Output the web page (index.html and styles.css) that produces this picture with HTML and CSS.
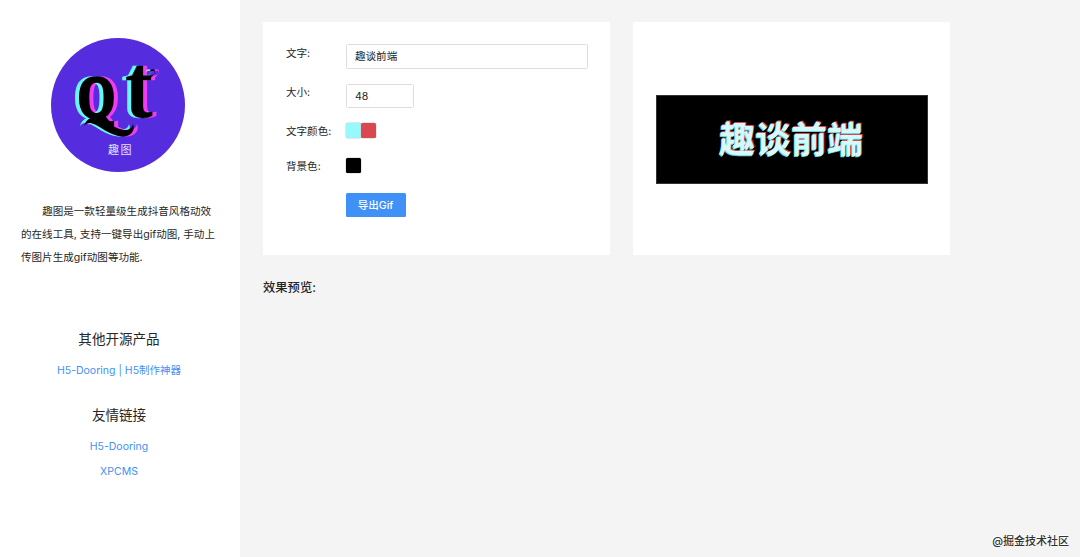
FILE: index.html
```html
<!DOCTYPE html>
<html lang="zh-CN">
<head>
<meta charset="utf-8">
<title>趣图</title>
<link rel="stylesheet" href="styles.css">
</head>
<body>
<div class="layout">
  <aside class="sidebar">
    <svg class="logo" viewBox="0 0 134 134" role="img" aria-label="趣图">
      <defs>
        <g id="mark">
          <text class="mark-q" transform="translate(27 78.5) scale(.79 1)">Q</text>
          <text class="mark-t" transform="translate(74 79) scale(.92 1)">t</text>
          <!-- flourishes under the Q and on the crossbar of the t -->
          <path d="M33 88C35 81 42 77 48 80C57 84 64 91 73 92C78 92 81 90 82 86C85 93 79 99 71 98.500C58 97.500 49 87.500 41 85.500C37 84.500 35 85.500 33 88Z"/>
          <path d="M92 38H98Q103 37.500 104 34Q102 31.500 99 34A2.600 2.600 0 1 1 103 36Q101 40.500 94 41H92Z"/>
        </g>
      </defs>
      <circle cx="67" cy="67" r="67" fill="#552ddf"/>
      <use href="#mark" x="4" fill="#f13cf4" stroke="#f13cf4"/>
      <use href="#mark" x="-4" fill="#66f7fc" stroke="#66f7fc"/>
      <use href="#mark" fill="#000" stroke="#000"/>
      <text class="mark-name" x="57" y="116">趣图</text>
    </svg>
    <p class="intro">趣图是一款轻量级生成抖音风格动效的在线工具, 支持一键导出gif动图, 手动上传图片生成gif动图等功能.</p>
    <section class="links">
      <h3>其他开源产品</h3>
      <a>H5-Dooring | H5制作神器</a>
    </section>
    <section class="links">
      <h3>友情链接</h3>
      <a>H5-Dooring</a>
      <a>XPCMS</a>
    </section>
  </aside>
  <main class="content">
    <div class="panels">
      <form class="panel form">
        <div class="row row-text"><label>文字:</label><div class="input">趣谈前端</div></div>
        <div class="row row-size"><label>大小:</label><div class="input small">48</div></div>
        <div class="row row-color"><label>文字颜色:</label><span class="swatch cyan"></span><span class="swatch red"></span></div>
        <div class="row row-bg"><label>背景色:</label><span class="swatch black"></span></div>
        <button class="export" type="button">导出Gif</button>
      </form>
      <div class="panel preview"><div class="stage">趣谈前端</div></div>
    </div>
    <h2 class="result">效果预览:</h2>
  </main>
  <div class="watermark">@掘金技术社区</div>
</div>
</body>
</html>
```
FILE: styles.css
```css
* { box-sizing: border-box; }
body {
  margin: 0;
  font: 10.57px/23px Inter, "Noto Sans CJK SC", sans-serif;
  color: #262626;
}
h2, h3, p { margin: 0; }
.layout {
  position: relative;
  display: flex;
  height: 557px;
  overflow: hidden;
  background: #f4f4f4;
}
.sidebar {
  width: 240px;
  padding: 38px 21px 0;
  background: #fff;
  display: flex;
  flex-direction: column;
}
.logo {
  width: 134px;
  height: 134px;
  margin-left: 30px;
  flex: none;
}
.mark-q {
  font: bold 60px "Liberation Serif", serif;
  stroke-width: 3.4px;
}
.mark-t {
  font: bold 90px "Liberation Serif", serif;
  stroke-width: .3px;
}
.logo path { stroke: none; }
.mark-name {
  font: 11px "Noto Sans CJK SC", sans-serif;
  letter-spacing: 1.5px;
  fill: #e9e3ff;
}
.intro {
  margin: 28px 0 58px;
  width: 197px;
  text-indent: 2em;
}
.links {
  display: flex;
  flex-direction: column;
  align-items: center;
  width: 196px;
  margin-bottom: 20px;
}
.links h3 {
  font-size: 13.55px;
  line-height: 24px;
  font-weight: 400;
  margin-bottom: 7px;
}
.links a {
  color: #3f91f7;
  font-size: 10.5px;
  line-height: 25px;
}
.content { padding: 22px 0 0 23px; }
.panels {
  display: flex;
  gap: 23px;
}
.panel {
  height: 233px;
  background: #fff;
}
.form {
  width: 347px;
  padding: 22px 22px 0 23px;
}
.row {
  display: flex;
  align-items: flex-start;
}
.row label {
  width: 60px;
  line-height: 20px;
}
.row-text { height: 40px; }
.row-size { height: 38px; }
.row-size label { line-height: 18px; }
.row-color { height: 35px; }
.row-bg { height: 36px; }
.input {
  width: 242px;
  height: 25px;
  padding: 0 8px;
  border: 1px solid #dedede;
  border-radius: 1.5px;
  line-height: 23px;
}
.input.small {
  width: 68px;
  height: 24px;
  line-height: 24px;
}
.swatch {
  width: 15px;
  height: 15px;
  margin-top: 1px;
  border-radius: 1.5px;
  box-shadow: 0 0 0 .5px #cfcfcf;
}
.cyan { background: #98f9fc; }
.red { background: #d9484f; }
.black { background: #000; }
.export {
  display: block;
  width: 60px;
  height: 24px;
  margin-left: 60px;
  padding: 0 1px 0 0;
  border: 0;
  border-radius: 1.5px;
  background: #3f91f8;
  color: #fff;
  font: inherit;
  font-weight: 500;
}
.preview {
  width: 317px;
  padding: 73px 22px 0 23px;
}
.stage {
  height: 89px;
  padding-right: 2px;
  border: 1px solid #333;
  background: #000;
  color: #d6f9fb;
  font: bold 36px/82px "Noto Sans CJK SC", sans-serif;
  text-align: center;
  text-shadow: -.7px .7px 0 #68d2d8, .7px -.7px 0 #d9484f;
}
.result {
  margin-top: 21px;
  font-size: 12.3px;
  font-weight: 500;
}
.watermark {
  position: absolute;
  right: 11px;
  bottom: 4px;
  color: #333;
  font-size: 11px;
  font-weight: 500;
  text-shadow: -1px -1px 0 #fff;
  white-space: nowrap;
}
```
